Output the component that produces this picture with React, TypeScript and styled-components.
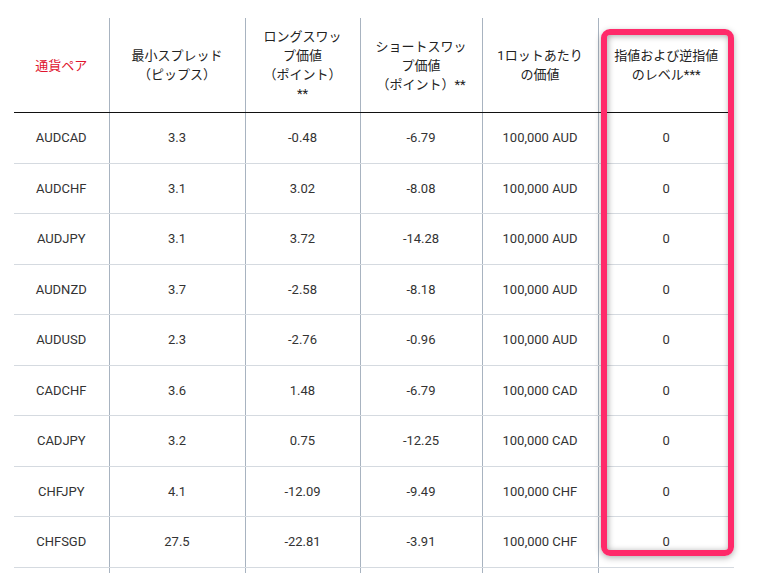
import React from 'react';
import styled, { createGlobalStyle } from 'styled-components';

const GlobalStyle = createGlobalStyle`
  html, body {
    margin: 0;
    padding: 0;
    background: #ffffff;
  }
  body {
    font-family: Roboto, "Noto Sans CJK JP", sans-serif;
  }
`;

const Page = styled.div`
  position: relative;
  width: 768px;
  height: 573px;
  overflow: hidden;
  padding: 18px 0 0 14px;
  box-sizing: border-box;
`;

const Table = styled.table`
  border-collapse: collapse;
  table-layout: fixed;
  width: 720px;
  color: #333;
  font-size: 13px;
`;

const Col = styled.col<{ $w: number }>`
  width: ${(p) => p.$w}px;
`;

const HeadCell = styled.th<{ $red?: boolean; $first?: boolean }>`
  height: 94px;
  padding: 0 8px;
  font-weight: 400;
  line-height: 19px;
  text-align: center;
  vertical-align: middle;
  color: ${(p) => (p.$red ? '#e0142e' : '#222')};
  border-bottom: 1.5px solid #111;
  border-left: ${(p) => (p.$first ? 'none' : '1px solid #a8b3c0')};
`;

const Cell = styled.td<{ $first?: boolean }>`
  height: 49.5px;
  padding: 0 4px;
  text-align: center;
  vertical-align: middle;
  border-bottom: 1px solid #d5dae0;
  border-left: ${(p) => (p.$first ? 'none' : '1px solid #a8b3c0')};
`;

const Highlight = styled.div`
  position: absolute;
  left: 601px;
  top: 29px;
  width: 133px;
  height: 527px;
  box-sizing: border-box;
  border: 6px solid #ff2a6a;
  border-radius: 9px;
  box-shadow: 0 2px 6px rgba(0, 0, 0, 0.3), inset 1px 1px 6px rgba(0, 0, 0, 0.35);
  pointer-events: none;
`;

type Row = [string, string, string, string, string, string];

const widths = [95, 136, 115, 122, 116, 136];

const rows: Row[] = [
  ['AUDCAD', '3.3', '-0.48', '-6.79', '100,000 AUD', '0'],
  ['AUDCHF', '3.1', '3.02', '-8.08', '100,000 AUD', '0'],
  ['AUDJPY', '3.1', '3.72', '-14.28', '100,000 AUD', '0'],
  ['AUDNZD', '3.7', '-2.58', '-8.18', '100,000 AUD', '0'],
  ['AUDUSD', '2.3', '-2.76', '-0.96', '100,000 AUD', '0'],
  ['CADCHF', '3.6', '1.48', '-6.79', '100,000 CAD', '0'],
  ['CADJPY', '3.2', '0.75', '-12.25', '100,000 CAD', '0'],
  ['CHFJPY', '4.1', '-12.09', '-9.49', '100,000 CHF', '0'],
  ['CHFSGD', '27.5', '-22.81', '-3.91', '100,000 CHF', '0'],
  ['', '', '', '', '', ''],
];

const App: React.FC = () => {
  return (
    <Page>
      <GlobalStyle />
      <Table>
        <colgroup>
          {widths.map((w, i) => (
            <Col key={i} $w={w} />
          ))}
        </colgroup>
        <thead>
          <tr>
            <HeadCell $first $red>通貨ペア</HeadCell>
            <HeadCell>最小スプレッド<br />（ピップス）</HeadCell>
            <HeadCell>ロングスワッ<br />プ価値<br />（ポイント）<br />**</HeadCell>
            <HeadCell>ショートスワッ<br />プ価値<br />（ポイント）**</HeadCell>
            <HeadCell>1ロットあたり<br />の価値</HeadCell>
            <HeadCell>指値および逆指値<br />のレベル***</HeadCell>
          </tr>
        </thead>
        <tbody>
          {rows.map((r, ri) => (
            <tr key={ri}>
              {r.map((v, i) => (
                <Cell key={i} $first={i === 0}>{v}</Cell>
              ))}
            </tr>
          ))}
        </tbody>
      </Table>
      <Highlight />
    </Page>
  );
};

export default App;
